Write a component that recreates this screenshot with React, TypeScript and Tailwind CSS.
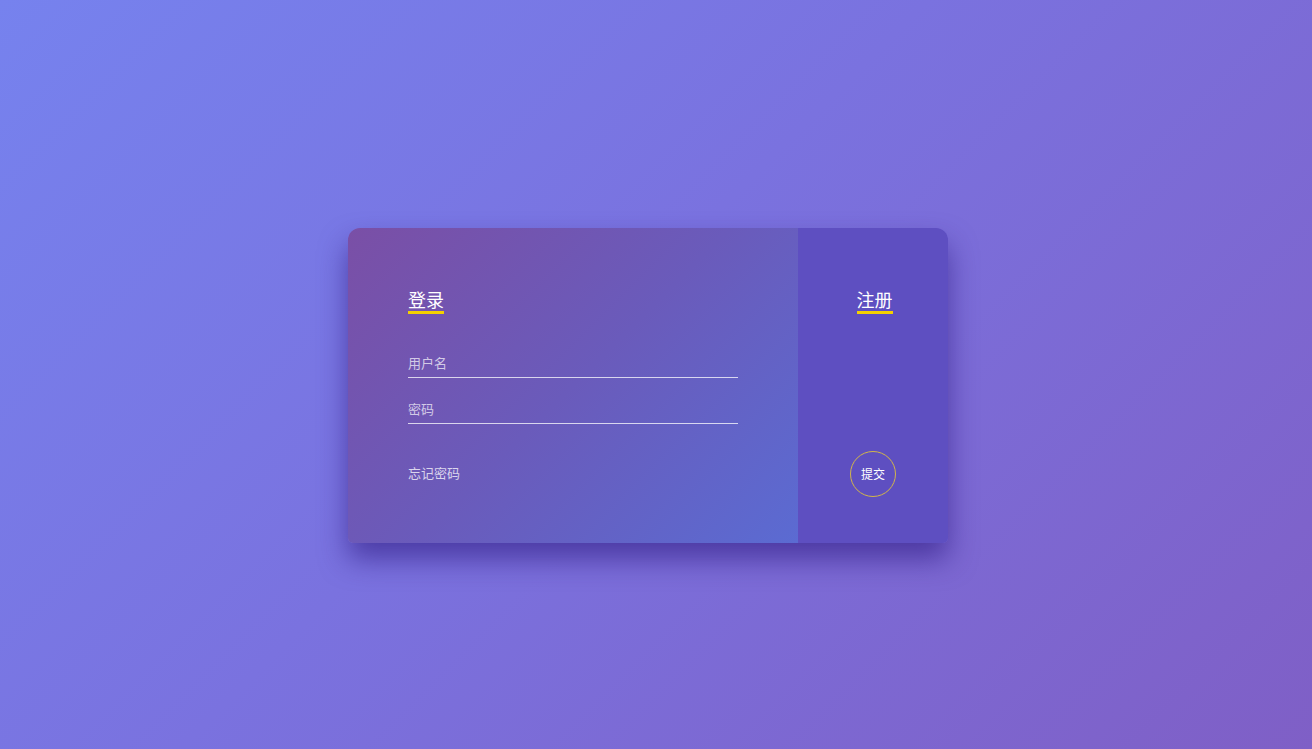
export default function App() {
  return (
    <div
      className="flex h-screen w-full items-center justify-center bg-[linear-gradient(135deg,#7682ee_0%,#7a72df_45%,#7f5fc6_100%)] pr-4 pt-[22px]"
      style={{ fontFamily: '"Noto Sans CJK SC", "Noto Sans", sans-serif' }}
    >
      <div className="flex h-[315px] w-[600px] overflow-hidden rounded-t-[12px] rounded-b-[5px] shadow-[0_16px_28px_rgba(50,30,135,0.65)]">
        <div className="flex w-[450px] flex-col bg-[linear-gradient(135deg,#7a4fa6_0%,#6a5bbb_50%,#5b6bd2_100%)] px-[60px] pt-[60px]">
          <div>
            <span className="inline-block border-b-[3px] border-[#f4d000] pb-px text-[18px] leading-[22px] text-white">
              登录
            </span>
          </div>

          <input
            type="text"
            placeholder="用户名"
            className="mt-[35px] h-[29px] w-[330px] border-b border-white/75 bg-transparent pb-[2px] text-[13px] text-white outline-none placeholder:text-white/70"
          />
          <input
            type="password"
            placeholder="密码"
            className="mt-[17px] h-[29px] w-[330px] border-b border-white/75 bg-transparent pb-[2px] text-[13px] text-white outline-none placeholder:text-white/70"
          />

          <a className="mt-[39px] text-[13px] leading-[20px] text-white/75">
            忘记密码
          </a>
        </div>

        <div className="flex w-[150px] flex-col items-center bg-[#5e4fc1] pt-[60px]">
          <span className="ml-[3px] inline-block border-b-[3px] border-[#f4d000] pb-px text-[18px] leading-[22px] text-white">
            注册
          </span>

          <button className="mt-[137px] flex h-[46px] w-[46px] items-center justify-center rounded-full border border-[#d2b64a] text-[12px] text-white">
            提交
          </button>
        </div>
      </div>
    </div>
  );
}
